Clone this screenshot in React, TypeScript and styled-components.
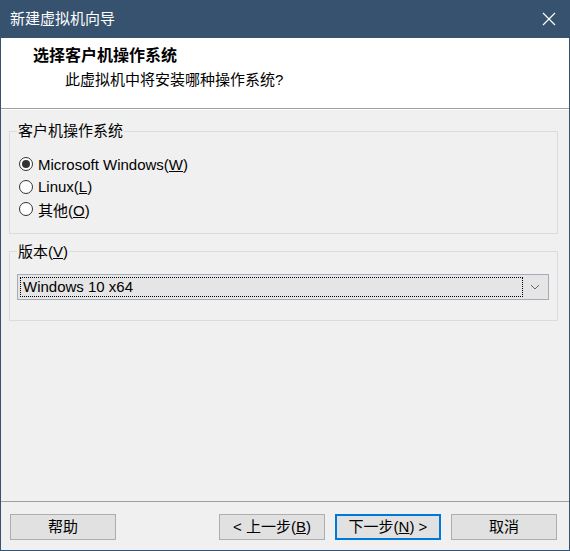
import React, { useState } from "react";
import styled, { createGlobalStyle } from "styled-components";

const GlobalStyle = createGlobalStyle`
	html, body {
		margin: 0;
		padding: 0;
		background: #f0f0f0;
	}
	* {
		box-sizing: border-box;
	}
`;

const uiFont = `"Liberation Sans", "Noto Sans CJK SC", sans-serif`;

const Window = styled.div`
	width: 570px;
	height: 551px;
	display: flex;
	flex-direction: column;
	background: #f0f0f0;
	border: 1px solid #37536f;
	border-top: none;
	font-family: ${uiFont};
	font-size: 15px;
	color: #000;
`;

const TitleBar = styled.div`
	height: 38px;
	margin: 0 -1px;
	background: #36526f;
	display: flex;
	align-items: center;
	justify-content: space-between;
	padding: 0 14px 0 10px;
	color: #fff;
	flex-shrink: 0;
`;

const TitleText = styled.span`
	font-size: 15px;
	line-height: 20px;
`;

const CloseIcon = styled.svg`
	width: 14px;
	height: 14px;
`;

const Header = styled.div`
	height: 71px;
	background: #fff;
	border-bottom: 1px solid #a0a0a0;
	box-shadow: 0 1px 0 #fff;
	padding: 8px 0 0 32px;
	flex-shrink: 0;
`;

const HeaderTitle = styled.div`
	font-weight: bold;
	font-size: 16px;
	line-height: 20px;
`;

const HeaderSub = styled.div`
	font-size: 15px;
	line-height: 22px;
	margin: 3px 0 0 32px;
`;

const Content = styled.div`
	flex: 1;
	padding: 12px 11px 0 8px;
	display: flex;
	flex-direction: column;
	gap: 8px;
`;

const Group = styled.fieldset<{ $pad: string }>`
	margin: 0;
	border: 1px solid #dcdcdc;
	padding: ${p => p.$pad};
	min-width: 0;
`;

const Legend = styled.legend<{ $indent: number }>`
	padding: 0 1px;
	margin-left: ${p => p.$indent}px;
	font-size: 15px;
	line-height: 20px;
`;

const RadioRow = styled.label`
	display: flex;
	align-items: center;
	height: 22.5px;
	gap: 5px;
	cursor: default;
`;

const RadioCircle = styled.span<{ $checked: boolean }>`
	width: 14px;
	height: 14px;
	border-radius: 50%;
	border: 1px solid #333;
	background: #fff;
	display: flex;
	align-items: center;
	justify-content: center;
	flex-shrink: 0;

	&::after {
		content: "";
		width: 8px;
		height: 8px;
		border-radius: 50%;
		background: ${p => (p.$checked ? "#333" : "transparent")};
	}
`;

const Select = styled.div`
	height: 26px;
	background: #e5e5e5;
	border: 1px solid #a3adb8;
	display: flex;
	align-items: center;
	padding: 2px;
`;

const SelectValue = styled.div`
	flex: 1;
	height: 100%;
	border: 1px dotted #000;
	display: flex;
	align-items: center;
	padding-left: 2px;
	font-family: "Liberation Sans", Arial, sans-serif;
	font-size: 15px;
`;

const Arrow = styled.svg`
	width: 22px;
	height: 10px;
	margin-left: 1px;
`;

const Footer = styled.div`
	height: 49px;
	border-top: 1px solid #a0a0a0;
	display: flex;
	align-items: flex-start;
	padding: 12px 12px 0 9px;
	gap: 10px;
	flex-shrink: 0;
`;

const Button = styled.button<{ $primary?: boolean }>`
	width: 106px;
	height: 26px;
	background: #e1e1e1;
	border: ${p => (p.$primary ? "2px solid #0078d7" : "1px solid #adadad")};
	font-family: ${uiFont};
	font-size: 15px;
	line-height: 20px;
	color: #000;
	padding: 0;
	display: flex;
	align-items: center;
	justify-content: center;
`;

const Spacer = styled.div`
	flex: 1;
`;

const options = [
	{ id: "win", label: "Microsoft Windows", key: "W" },
	{ id: "linux", label: "Linux", key: "L" },
	{ id: "other", label: "其他", key: "O" },
];

export default function App() {
	const [os, setOs] = useState("win");

	return (
		<>
			<GlobalStyle />
			<Window>
				<TitleBar>
					<TitleText>新建虚拟机向导</TitleText>
					<CloseIcon viewBox="0 0 14 14">
						<path d="M1 1 L13 13 M13 1 L1 13" stroke="#fff" strokeWidth="1.2" />
					</CloseIcon>
				</TitleBar>
				<Header>
					<HeaderTitle>选择客户机操作系统</HeaderTitle>
					<HeaderSub>此虚拟机中将安装哪种操作系统?</HeaderSub>
				</Header>
				<Content>
					<Group $pad="12px 10px 12px 9px">
						<Legend $indent={-2}>客户机操作系统</Legend>
						{options.map(o => (
							<RadioRow key={o.id} onClick={() => setOs(o.id)}>
								<RadioCircle $checked={os === o.id} />
								<span>
									{o.label}(<u>{o.key}</u>)
								</span>
							</RadioRow>
						))}
					</Group>
					<Group $pad="12px 8px 20px 7px">
						<Legend $indent={0}>
							版本(<u>V</u>)
						</Legend>
						<Select>
							<SelectValue>Windows 10 x64</SelectValue>
							<Arrow viewBox="0 0 22 10">
								<path d="M7 3 L11 7 L15 3" stroke="#666" strokeWidth="1" fill="none" />
							</Arrow>
						</Select>
					</Group>
				</Content>
				<Footer>
					<Button>帮助</Button>
					<Spacer />
					<Button>
						&lt; 上一步(<u>B</u>)
					</Button>
					<Button $primary>
						下一步(<u>N</u>) &gt;
					</Button>
					<Button>取消</Button>
				</Footer>
			</Window>
		</>
	);
}
